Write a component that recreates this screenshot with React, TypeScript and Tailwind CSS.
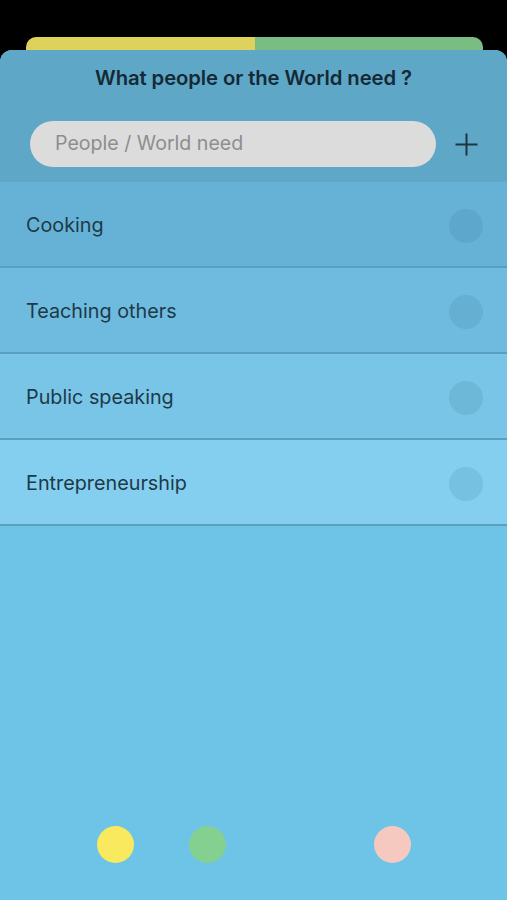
import React from "react";

const items = [
  { label: "Cooking", bg: "bg-[#66b2d6]" },
  { label: "Teaching others", bg: "bg-[#6fbbdf]" },
  { label: "Public speaking", bg: "bg-[#79c5e7]" },
  { label: "Entrepreneurship", bg: "bg-[#84cff0]" },
];

export default function App() {
  return (
    <div
      className="w-[507px] h-[900px] bg-black flex flex-col overflow-hidden"
      style={{ fontFamily: "Inter, 'Noto Sans', sans-serif" }}
    >
      <div className="h-[37px]" />
      <div className="mx-[26px] w-[457px] h-[14px] flex rounded-t-[10px] overflow-hidden">
        <div className="flex-1 bg-[#ded25c]" />
        <div className="flex-1 bg-[#79bd82]" />
      </div>
      <div className="-mt-[1px] flex-1 flex flex-col bg-[#6ec4e7] rounded-t-[12px] overflow-hidden">
        <div className="bg-[#5fa7c7] h-[132px] flex flex-col">
          <div className="h-[56px] flex items-center justify-center">
            <span className="text-[20.3px] font-semibold text-[#142a36] tracking-[-0.1px]">
              What people or the World need ?
            </span>
          </div>
          <div className="flex items-center pl-[30px] pt-[15px]">
            <div className="w-[406px] h-[46px] rounded-full bg-[#dcdcdc] flex items-center pl-[25px]">
              <span className="text-[19.6px] text-[#8e8e8e]">People / World need</span>
            </div>
            <div className="ml-[19px] flex items-center justify-center">
              <svg width="23" height="23" viewBox="0 0 23 23">
                <path d="M11.5 0.5v22M0.5 11.5h22" stroke="#1c3542" strokeWidth="2" fill="none" />
              </svg>
            </div>
          </div>
        </div>
        {items.map((it) => (
          <div
            key={it.label}
            className={`${it.bg} h-[86px] flex items-center justify-between pl-[26px] pr-[24px] pt-[4px] border-b-[2px] border-[#5a9ec0]`}
          >
            <span className="text-[19.8px] text-[#1d3a47]">{it.label}</span>
            <div className="w-[34px] h-[34px] rounded-full bg-[#2a6c8c]/15" />
          </div>
        ))}
        <div className="flex-1" />
        <div className="h-[110px]">
          <div className="flex items-start h-[110px] pt-[36px]">
            <div className="w-[37px] h-[37px] rounded-full bg-[#f8e95f] ml-[97px]" />
            <div className="w-[37px] h-[37px] rounded-full bg-[#84d090] ml-[55px]" />
            <div className="w-[37px] h-[37px] rounded-full bg-[#f6c9c0] ml-[148px]" />
          </div>
        </div>
      </div>
    </div>
  );
}
